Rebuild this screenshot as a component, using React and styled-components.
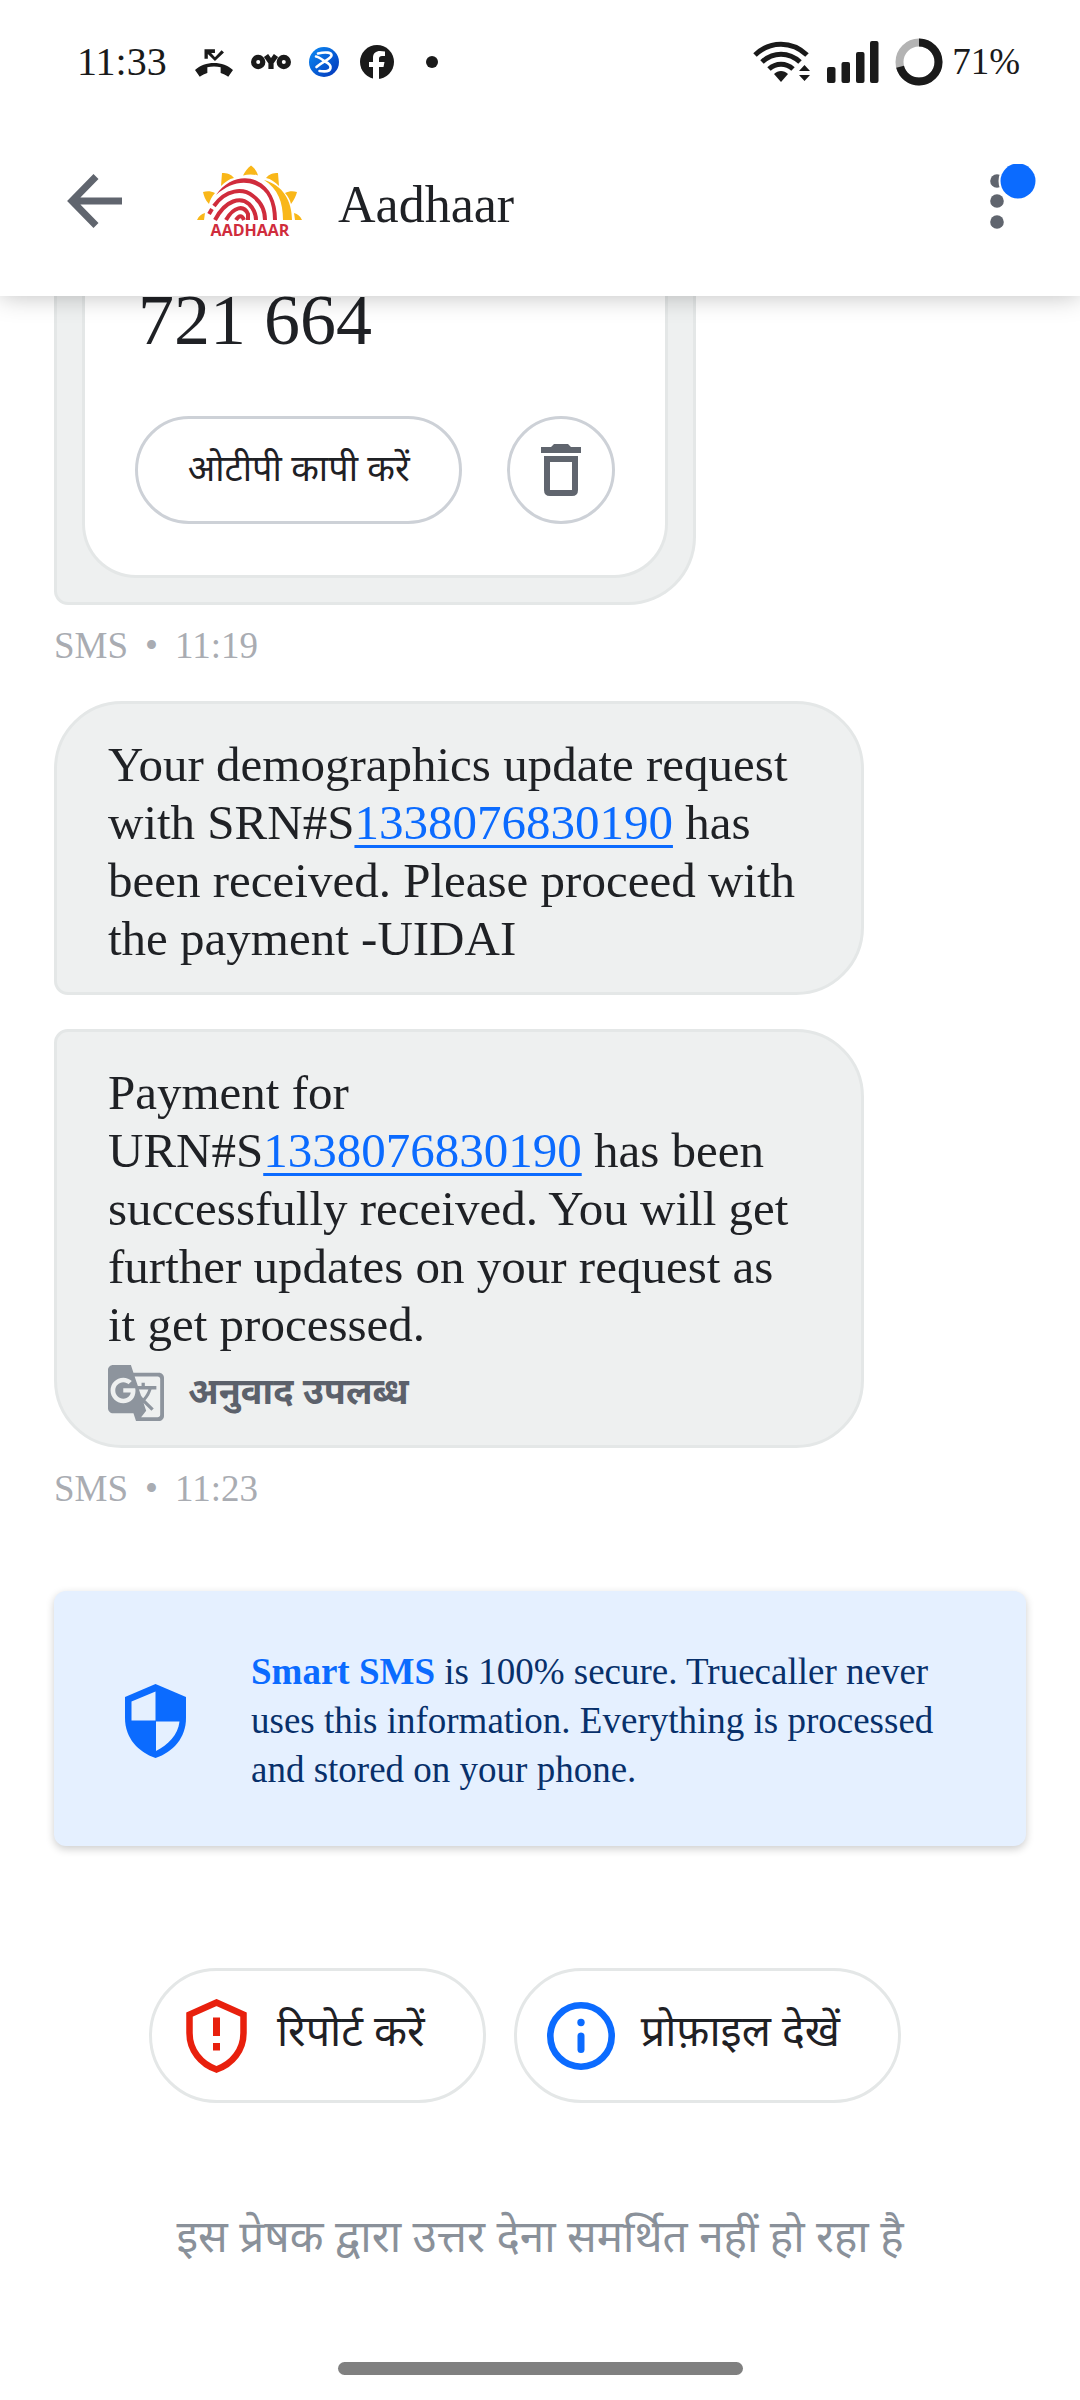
import React from "react";
import styled, { createGlobalStyle } from "styled-components";

const GlobalStyle = createGlobalStyle`
  body { margin: 0; background: #fff; }
  * { box-sizing: border-box; }
`;

const latin = `"Liberation Serif", "Noto Sans Devanagari", "Noto Sans", serif`;
const hindi = `"Noto Sans Devanagari", "Noto Sans", sans-serif`;

const Page = styled.div`
  display: flex;
  flex-direction: column;
  min-height: 100vh;
  color: #1f2125;
  font-family: ${latin};
`;

const TopArea = styled.header`
  position: relative;
  z-index: 1;
  background: #fff;
  box-shadow: 0 0 24px rgba(0, 0, 0, 0.26);
`;

const StatusBar = styled.div`
  display: flex;
  align-items: center;
  justify-content: space-between;
  height: 124px;
  padding: 0 60px 0 77px;
  color: #1a1a1a;
`;

const StatusGroup = styled.div`
  display: flex;
  align-items: center;
  gap: ${(p) => p.$gap}px;
  font-size: ${(p) => p.$size}px;
  line-height: 48px;
`;

const StatusIcons = styled.div`
  display: flex;
  align-items: center;
  gap: 18px;
`;

const AppBar = styled.div`
  display: flex;
  align-items: center;
  height: 172px;
  padding: 0 44px 18px 67px;
`;

const IconButton = styled.button`
  display: flex;
  padding: 0;
  border: 0;
  background: none;
  color: #60656e;
  cursor: pointer;
`;

const Avatar = styled.div`
  display: flex;
  margin: 0 35px 0 75px;
`;

const Title = styled.h1`
  flex: 1;
  margin: 8px 0 0;
  font-size: 52px;
  line-height: 60px;
  font-weight: 400;
`;

const Thread = styled.main`
  display: flex;
  flex-direction: column;
  align-items: flex-start;
  padding: 0 54px;
`;

const Bubble = styled.article`
  width: 100%;
  max-width: 810px;
  padding: 32px 51px 24px;
  border: 3px solid #e4e7e7;
  border-radius: ${(p) => p.$radius};
  background: #eef0f0;
  margin-bottom: ${(p) => p.$after || 0}px;
`;

const MessageText = styled.p`
  margin: 0;
  font-size: 49px;
  line-height: 58px;
`;

const NumberLink = styled.a`
  color: #0b6bff;
  text-decoration: underline;
  text-decoration-thickness: 3px;
  text-underline-offset: 6px;
`;

const OtpBubble = styled.article`
  width: 100%;
  max-width: 642px;
  padding: 0 25px 24px;
  border: 3px solid #e4e7e7;
  border-top: 0;
  border-radius: 0 0 68px 14px;
  background: #eef0f0;
`;

const OtpCard = styled.div`
  padding: 0 50px 51px;
  border: 3px solid #e4e7e7;
  border-top: 0;
  border-radius: 0 0 54px 54px;
  background: #fff;
`;

const OtpCode = styled.p`
  margin: -16px 0 0;
  padding: 0 3px 56px;
  font-size: 72px;
  line-height: 80px;
`;

const OtpActions = styled.div`
  display: flex;
  gap: 45px;
`;

const OutlineButton = styled.button`
  display: flex;
  align-items: center;
  justify-content: center;
  width: ${(p) => p.$width}px;
  height: 108px;
  padding: 0;
  border: 3px solid #cdd1d7;
  border-radius: 54px;
  background: #fff;
  color: ${(p) => p.$color || "#1f2125"};
  font: 400 36px/48px ${hindi};
  cursor: pointer;
`;

const ButtonLabel = styled.span`
  padding-top: 5px;
`;

const Meta = styled.p`
  display: flex;
  gap: 17px;
  margin: 18px 0 ${(p) => p.$after}px;
  color: #a9acb2;
  font-size: 37px;
  line-height: 45px;
`;

const Translate = styled.button`
  display: flex;
  align-items: center;
  gap: 24px;
  height: 56px;
  margin-top: 11px;
  padding: 0;
  border: 0;
  background: none;
  color: #5c616b;
  font: 700 36px/48px ${hindi};
  cursor: pointer;
`;

const Notice = styled.section`
  display: flex;
  align-items: center;
  gap: 65px;
  width: 100%;
  padding: 56px 71px 52px;
  border-radius: 12px;
  background: #e5f0ff;
  box-shadow: 0 3px 9px rgba(0, 0, 0, 0.2);
  color: #08306b;
`;

const NoticeText = styled.p`
  flex: 1;
  margin: 0;
  font-size: 37px;
  line-height: 49px;
`;

const Brand = styled.strong`
  color: #0b6bff;
`;

const Actions = styled.div`
  display: flex;
  justify-content: center;
  gap: 28px;
  padding: 122px 30px 0 0;
`;

const Chip = styled.button`
  display: flex;
  align-items: center;
  gap: ${(p) => p.$gap}px;
  height: 135px;
  padding: 0 58px 0 ${(p) => p.$left}px;
  border: 3px solid #e4e7e7;
  border-radius: 68px;
  background: #fff;
  color: #1f2125;
  font: 400 43px/56px ${hindi};
  cursor: pointer;
`;

const NoReply = styled.p`
  margin: 109px 0 0;
  text-align: center;
  color: #8a919a;
  font: 400 44px/60px ${hindi};
`;

const HomeBar = styled.div`
  width: 405px;
  height: 13px;
  margin: auto auto 25px;
  border-radius: 7px;
  background: #808080;
`;

const MissedCall = () => (
  <svg width="38" height="31" viewBox="0 0 40 32" fill="#1a1a1a">
    <path d="M10 2h11v4h-4l4 4.500L28 3l2.500 2.500L21 14.500 13.500 7v5H10z" />
    <path d="M0 24C10 14 30 14 40 24l-5 7c-3-2-5-3-8-4v-6c-4-1-10-1-14 0v6c-3 1-5 2-8 4z" />
  </svg>
);

const Oyo = () => (
  <svg width="40" height="16" viewBox="0 0 40 16" fill="none" stroke="#1a1a1a" strokeWidth="5.200">
    <circle cx="7.200" cy="8" r="4.600" />
    <circle cx="32.800" cy="8" r="4.600" />
    <path d="M15 1.500l5 7 5-7M20 7v8" />
  </svg>
);

const BlueRound = () => (
  <svg width="30" height="30" viewBox="0 0 30 30" fill="none">
    <defs>
      <linearGradient id="blueRound" x1="0" y1="0" x2="1" y2="1">
        <stop offset="0" stopColor="#0b8cf5" />
        <stop offset="1" stopColor="#0433b8" />
      </linearGradient>
    </defs>
    <circle cx="15" cy="15" r="15" fill="url(#blueRound)" />
    <path
      d="M9 6.500c8-2 14-1 13.500 2C22 12 14 14 7.500 20M7 9.500c3 .5 6 3 9 5 4 2 6 4 5.500 6.500-.5 3-5 4-11 3"
      stroke="#fff"
      strokeWidth="2.600"
      strokeLinecap="round"
    />
  </svg>
);

const Facebook = () => (
  <svg width="37" height="34" viewBox="-3 0 37 34">
    <circle cx="17" cy="17" r="17" fill="#1a1a1a" />
    <path d="M13 34V22H9v-5h4v-4c0-5 3-7 7-7l5 .5V11h-3c-2 0-3 1-3 2.500V17h5.500l-1 5H19v12z" fill="#fff" />
  </svg>
);

const Dot = () => (
  <svg width="16" height="12" viewBox="-4 0 16 12">
    <circle cx="6" cy="6" r="6" fill="#1a1a1a" />
  </svg>
);

const Wifi = () => (
  <svg width="58" height="42" viewBox="0 0 58 42" fill="none" stroke="#1a1a1a" strokeWidth="5">
    <path d="M2 14C17-.5 39-.5 54 14M9 21c11-10.500 27-10.500 38 0M16 28c7-6.500 17-6.500 24 0" />
    <path d="M21 33c4-4 10-4 14 0l-7 8z" fill="#1a1a1a" stroke="none" />
    <path d="M46 30l5.500-6 5.500 6zM46 34l5.500 6 5.500-6z" fill="#1a1a1a" stroke="none" />
  </svg>
);

const Signal = () => (
  <svg width="52" height="42" viewBox="0 0 52 42" fill="#1a1a1a">
    <rect x="0" y="26" width="8.500" height="16" rx="2" />
    <rect x="14.500" y="21" width="8.500" height="21" rx="2" />
    <rect x="29" y="11" width="8.500" height="31" rx="2" />
    <rect x="43" y="0" width="8.500" height="42" rx="2" />
  </svg>
);

const BatteryRing = () => (
  <svg width="48" height="48" viewBox="0 0 48 48" fill="none" strokeWidth="8">
    <circle cx="24" cy="24" r="19.500" stroke="#b3b3b3" />
    <circle
      cx="24"
      cy="24"
      r="19.500"
      stroke="#1a1a1a"
      pathLength="100"
      strokeDasharray="71 29"
      transform="rotate(-90 24 24)"
    />
  </svg>
);

const BackArrow = () => (
  <svg width="55" height="54" viewBox="0 0 55 54" fill="none" stroke="currentColor" strokeWidth="7">
    <path d="M29 2.500L5 27l24 24.500M5 27h50" />
  </svg>
);

const AadhaarLogo = () => (
  <svg width="106" height="74" viewBox="0 0 106 74" fill="none" role="img" aria-label="Aadhaar">
    <g fill="#f9b719">
      <path d="M46 11.500c2-4 4-7 8-10 4 3 6 6 7 10-5-1.500-10-1.500-15 0z" />
      <path d="M24 22L25 9c5 0 9 1 12 5-5 1-9 4-13 8z" />
      <path d="M82 22L81 9c-5 0-9 1-12 5 5 1 9 4 13 8z" />
      <path d="M12 40C8 36 7 32 6 28c4-1 8-1 12 1-3 3-5 7-6 11z" />
      <path d="M94 40c3-4 5-8 6-12-4-1-8-1-12 1 3 3 5 7 6 11z" />
      <path d="M0 56c2-4 4-6 8-7l-1 7zM105 56c-2-4-4-6-8-7l1 7z" />
      <path d="M67 16c19 5 28 21 28 40h-9c0-18-5-31-19-40z" />
    </g>
    <path d="M19 31C30 15 47 11 60 17c13 6 20 20 20 39h-4c0-17-5-30-18-35-13-5-26-1-39 10z" fill="#d02c3c" />
    <g stroke="#d02c3c" strokeWidth="4">
      <path d="M17 42C29 25 46 24 56 32c8 6 12 14 12 24" />
      <path d="M18 56C29 35 44 33 52 40c5 5 7 10 7 16" />
      <path d="M29 56c8-14 18-15 22-6v6" />
      <path d="M39 56c3-5 6-5 8 0" />
      <path d="M12 50l3-5" />
    </g>
    <text
      x="53"
      y="72"
      textAnchor="middle"
      fontFamily="Open Sans, Noto Sans, sans-serif"
      fontWeight="700"
      fontSize="16"
      fill="#d02c3c"
    >
      AADHAAR
    </text>
  </svg>
);

const MoreDots = () => (
  <svg width="50" height="74" viewBox="0 0 50 74">
    <g fill="#60656e">
      <circle cx="11" cy="17" r="6.800" />
      <circle cx="11" cy="37" r="6.800" />
      <circle cx="11" cy="58" r="6.800" />
    </g>
    <circle cx="32" cy="17" r="19.500" fill="#fff" />
    <circle cx="32" cy="17" r="17.500" fill="#0b6bff" />
  </svg>
);

const Trash = () => (
  <svg width="40" height="52" viewBox="0 0 40 52" fill="currentColor">
    <path d="M0 3h10l3-3h14l3 3h10v6H0z" />
    <path fillRule="evenodd" d="M3 12h34v34q0 6-6 6H9q-6 0-6-6zM9 18v28h22V18z" />
  </svg>
);

const TranslateIcon = () => (
  <svg width="56" height="56" viewBox="1 1 22 22" fill="#8d949d">
    <path d="M21 4H11l-1-3H3c-1.100 0-2 .9-2 2v15c0 1.100.9 2 2 2h8l1 3h9c1.100 0 2-.9 2-2V6c0-1.100-.9-2-2-2zM7 16c-2.760 0-5-2.240-5-5s2.240-5 5-5c1.350 0 2.480.5 3.350 1.300L9.030 8.570c-.38-.36-1.040-.78-2.030-.78-1.740 0-3.150 1.440-3.150 3.210S5.260 14.210 7 14.210c2.010 0 2.840-1.440 2.920-2.410H7v-1.710h4.680c.07.31.12.61.12 1.020C11.800 13.970 9.890 16 7 16zm6.170-5.420h3.700c-.43 1.250-1.110 2.430-2.050 3.470-.31-.35-.6-.72-.86-1.100l-.79-2.370zm8.330 9.920c0 .55-.45 1-1 1H14l2-2.500-1.040-3.100 3.100 3.100.92-.92-3.300-3.250.02-.02c1.130-1.250 1.930-2.690 2.400-4.220H20v-1.300h-4.530V8h-1.290v1.290h-1.440L11.460 5.500h9.040c.55 0 1 .45 1 1v14z" />
  </svg>
);

const SecureShield = () => (
  <svg width="61" height="74" viewBox="0 0 61 74">
    <path d="M30.500 0L61 13v21c0 20-13 34-30.500 40C13 68 0 54 0 34V13z" fill="#0b6bff" />
    <path d="M30.500 7.500V36.500H6.500V17.500zM31 37.500h23.500C53 51 43 61 31 67z" fill="#e5f0ff" />
  </svg>
);

const ReportShield = () => (
  <svg width="61" height="74" viewBox="0 0 61 74">
    <path
      d="M30.500 3.500L57.500 15.500V34c0 17-11 31-27 36.500C14.500 65 3.500 51 3.500 34V15.500z"
      fill="none"
      stroke="#e8200d"
      strokeWidth="6.500"
    />
    <path d="M27 18.500h7V37h-7zM27 44h7v7.500h-7z" fill="#e8200d" />
  </svg>
);

const InfoCircle = () => (
  <svg width="68" height="68" viewBox="0 0 68 68">
    <circle cx="34" cy="34" r="30.700" fill="none" stroke="#0b6bff" strokeWidth="6.600" />
    <circle cx="34" cy="20.500" r="3.700" fill="#0b6bff" />
    <rect x="30.500" y="30.500" width="7" height="20.500" rx="3.500" fill="#0b6bff" />
  </svg>
);

const Stamp = ({ time, after }) => (
  <Meta $after={after}>
    <span>SMS</span>
    <span>•</span>
    <time>{time}</time>
  </Meta>
);

export default function App() {
  return (
    <>
      <GlobalStyle />
      <Page lang="hi">
        <TopArea>
          <StatusBar>
            <StatusGroup $gap={28} $size={40}>
              <time>11:33</time>
              <StatusIcons>
                <MissedCall />
                <Oyo />
                <BlueRound />
                <Facebook />
              </StatusIcons>
              <Dot />
            </StatusGroup>
            <StatusGroup $gap={16} $size={37}>
              <Wifi />
              <Signal />
              <StatusGroup $gap={9} $size={37}>
                <BatteryRing />
                <span>71%</span>
              </StatusGroup>
            </StatusGroup>
          </StatusBar>
          <AppBar>
            <IconButton type="button" aria-label="Back">
              <BackArrow />
            </IconButton>
            <Avatar>
              <AadhaarLogo />
            </Avatar>
            <Title>Aadhaar</Title>
            <IconButton type="button" aria-label="More options">
              <MoreDots />
            </IconButton>
          </AppBar>
        </TopArea>
        <Thread>
          <OtpBubble>
            <OtpCard>
              <OtpCode>721 664</OtpCode>
              <OtpActions>
                <OutlineButton type="button" $width={329}>
                  <ButtonLabel>ओटीपी कापी करें</ButtonLabel>
                </OutlineButton>
                <OutlineButton type="button" $width={108} $color="#60656e" aria-label="Delete">
                  <Trash />
                </OutlineButton>
              </OtpActions>
            </OtpCard>
          </OtpBubble>
          <Stamp time="11:19" after={33} />
          <Bubble $radius="68px 68px 68px 14px" $after={34}>
            <MessageText>
              Your demographics update request with SRN#S<NumberLink href="#srn">1338076830190</NumberLink> has been
              received. Please proceed with the payment -UIDAI
            </MessageText>
          </Bubble>
          <Bubble $radius="14px 68px 68px 68px">
            <MessageText>
              Payment for URN#S<NumberLink href="#urn">1338076830190</NumberLink> has been successfully received. You
              will get further updates on your request as it get processed.
            </MessageText>
            <Translate type="button">
              <TranslateIcon />
              <ButtonLabel>अनुवाद उपलब्ध</ButtonLabel>
            </Translate>
          </Bubble>
          <Stamp time="11:23" after={80} />
          <Notice>
            <SecureShield />
            <NoticeText>
              <Brand>Smart SMS</Brand> is 100% secure. Truecaller never uses this information. Everything is processed
              and stored on your phone.
            </NoticeText>
          </Notice>
        </Thread>
        <Actions>
          <Chip type="button" $left={34} $gap={30}>
            <ReportShield />
            रिपोर्ट करें
          </Chip>
          <Chip type="button" $left={30} $gap={26}>
            <InfoCircle />
            प्रोफ़ाइल देखें
          </Chip>
        </Actions>
        <NoReply>इस प्रेषक द्वारा उत्तर देना समर्थित नहीं हो रहा है</NoReply>
        <HomeBar />
      </Page>
    </>
  );
}
